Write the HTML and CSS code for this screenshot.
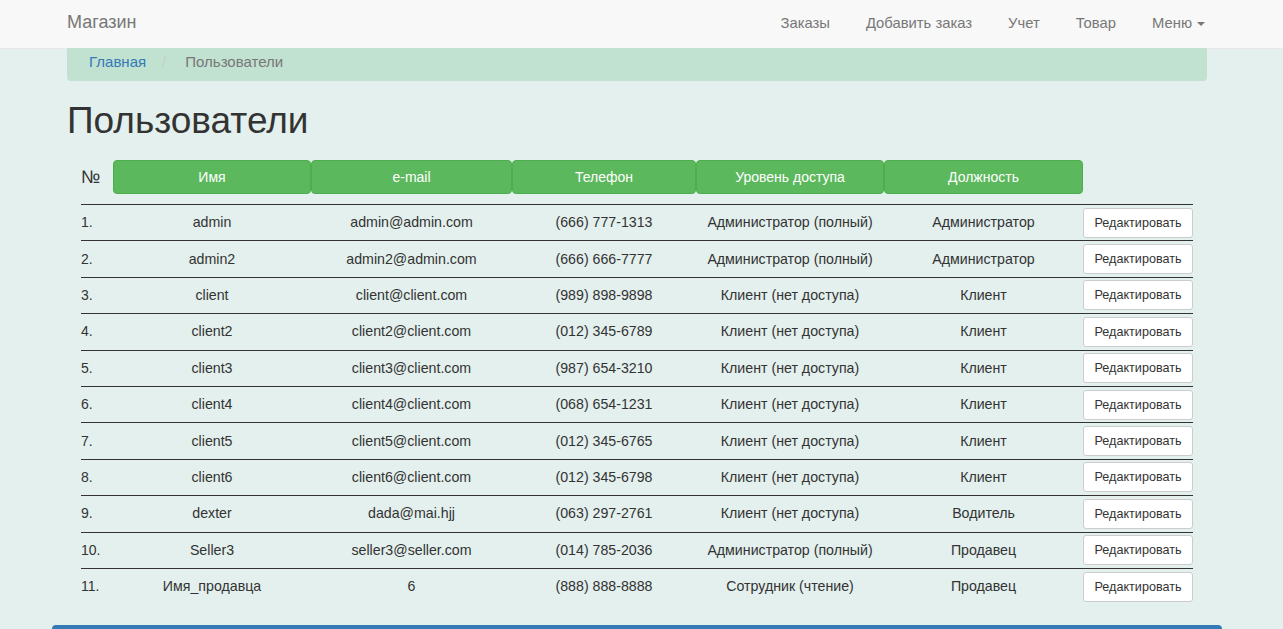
FILE: index.html
```html
<!DOCTYPE html>
<html lang="ru">
<head>
<meta charset="utf-8">
<title>Пользователи</title>
<link rel="stylesheet" href="styles.css">
</head>
<body>
<nav class="navbar">
  <div class="nav-inner">
    <a class="brand" href="#">Магазин</a>
    <ul class="nav-links">
      <li><a href="#">Заказы</a></li>
      <li><a href="#">Добавить заказ</a></li>
      <li><a href="#">Учет</a></li>
      <li><a href="#">Товар</a></li>
      <li><a href="#">Меню<span class="caret"></span></a></li>
    </ul>
  </div>
</nav>
<div class="container">
  <ol class="breadcrumb">
    <li><a href="#">Главная</a></li>
    <li class="sep">/</li>
    <li class="active">Пользователи</li>
  </ol>
  <h1 class="title">Пользователи</h1>
  <table class="users">
    <colgroup>
      <col class="c-num"><col class="c-name"><col class="c-mail"><col class="c-tel"><col class="c-lvl"><col class="c-pos"><col class="c-btn">
    </colgroup>
    <thead>
      <tr>
        <th class="num-h">№</th>
        <th><span class="hbtn">Имя</span></th>
        <th><span class="hbtn">e-mail</span></th>
        <th><span class="hbtn">Телефон</span></th>
        <th><span class="hbtn">Уровень доступа</span></th>
        <th><span class="hbtn">Должность</span></th>
        <th></th>
      </tr>
    </thead>
    <tbody>
      <tr><td class="num">1.</td><td>admin</td><td>admin@admin.com</td><td>(666) 777-1313</td><td>Администратор (полный)</td><td>Администратор</td><td><button class="ebtn">Редактировать</button></td></tr>
      <tr><td class="num">2.</td><td>admin2</td><td>admin2@admin.com</td><td>(666) 666-7777</td><td>Администратор (полный)</td><td>Администратор</td><td><button class="ebtn">Редактировать</button></td></tr>
      <tr><td class="num">3.</td><td>client</td><td>client@client.com</td><td>(989) 898-9898</td><td>Клиент (нет доступа)</td><td>Клиент</td><td><button class="ebtn">Редактировать</button></td></tr>
      <tr><td class="num">4.</td><td>client2</td><td>client2@client.com</td><td>(012) 345-6789</td><td>Клиент (нет доступа)</td><td>Клиент</td><td><button class="ebtn">Редактировать</button></td></tr>
      <tr><td class="num">5.</td><td>client3</td><td>client3@client.com</td><td>(987) 654-3210</td><td>Клиент (нет доступа)</td><td>Клиент</td><td><button class="ebtn">Редактировать</button></td></tr>
      <tr><td class="num">6.</td><td>client4</td><td>client4@client.com</td><td>(068) 654-1231</td><td>Клиент (нет доступа)</td><td>Клиент</td><td><button class="ebtn">Редактировать</button></td></tr>
      <tr><td class="num">7.</td><td>client5</td><td>client5@client.com</td><td>(012) 345-6765</td><td>Клиент (нет доступа)</td><td>Клиент</td><td><button class="ebtn">Редактировать</button></td></tr>
      <tr><td class="num">8.</td><td>client6</td><td>client6@client.com</td><td>(012) 345-6798</td><td>Клиент (нет доступа)</td><td>Клиент</td><td><button class="ebtn">Редактировать</button></td></tr>
      <tr><td class="num">9.</td><td>dexter</td><td>dada@mai.hjj</td><td>(063) 297-2761</td><td>Клиент (нет доступа)</td><td>Водитель</td><td><button class="ebtn">Редактировать</button></td></tr>
      <tr><td class="num">10.</td><td>Seller3</td><td>seller3@seller.com</td><td>(014) 785-2036</td><td>Администратор (полный)</td><td>Продавец</td><td><button class="ebtn">Редактировать</button></td></tr>
      <tr><td class="num">11.</td><td>Имя_продавца</td><td>6</td><td>(888) 888-8888</td><td>Сотрудник (чтение)</td><td>Продавец</td><td><button class="ebtn">Редактировать</button></td></tr>
    </tbody>
  </table>
</div>
<div class="footer-bar"></div>
</body>
</html>
```

FILE: styles.css
```css
* { box-sizing: border-box; }
html, body { margin: 0; padding: 0; }
body {
  background: #e3f0ed;
  font-family: "Liberation Sans", Arial, sans-serif;
  font-size: 14px;
  line-height: 20px;
  color: #333;
}
a { text-decoration: none; }

.navbar {
  height: 49px;
  background: #f8f8f8;
  border-bottom: 1px solid #e7e7e7;
}
.nav-inner {
  width: 1140px;
  margin-left: 67px;
  height: 48px;
  display: flex;
  align-items: center;
  justify-content: space-between;
}
.brand {
  font-size: 18px;
  color: #777;
  line-height: 20px;
  margin-top: -4px;
}
.nav-links {
  list-style: none;
  margin: 0;
  padding: 0;
  display: flex;
  gap: 36px;
  margin-right: 2px;
  margin-top: -3px;
}
.nav-links a {
  color: #777;
  font-size: 14.8px;
}
.caret {
  display: inline-block;
  width: 0;
  height: 0;
  margin-left: 5px;
  vertical-align: middle;
  border-top: 4px solid #777;
  border-left: 4px solid transparent;
  border-right: 4px solid transparent;
}

.container {
  width: 1140px;
  margin-left: 67px;
}
.breadcrumb {
  list-style: none;
  margin: -1px 0 0;
  padding: 4px 22px;
  height: 33px;
  background: #c1e1d1;
  border-radius: 0 0 4px 4px;
  display: flex;
  font-size: 15px;
}
.breadcrumb a { color: #337ab7; }
.breadcrumb .sep { color: #ccc; margin: 0 19px 0 16px; }
.breadcrumb .active { color: #777; }

.title {
  font-size: 37px;
  font-weight: 500;
  line-height: 40px;
  margin: 20px 0 10px;
  color: #333;
}

.users {
  margin-left: 14px;
  width: 1112px;
  table-layout: fixed;
  border-collapse: collapse;
  border-spacing: 0;
}
.c-num { width: 32px; }
.c-name { width: 198px; }
.c-mail { width: 201px; }
.c-tel { width: 184px; }
.c-lvl { width: 188px; }
.c-pos { width: 199px; }
.c-btn { width: 110px; }

.users th {
  padding: 9px 0 10px;
  font-weight: normal;
  text-align: center;
}
.users th.num-h {
  text-align: left;
  font-size: 18px;
}
.hbtn {
  display: block;
  height: 34px;
  line-height: 20px;
  padding: 6px 4px;
  background: #5cb85c;
  border: 1px solid #4cae4c;
  border-radius: 4px;
  color: #fff;
  font-size: 14px;
}
.users td {
  border-top: 1px solid #333;
  height: 36.4px;
  padding: 0 0 1px;
  text-align: center;
  vertical-align: middle;
  font-size: 14.2px;
}
.users td.num { text-align: left; font-size: 14px; }
.ebtn {
  display: block;
  width: 110px;
  height: 30px;
  margin: 1px 0 0;
  padding: 5px 4px;
  font-family: "Liberation Sans", Arial, sans-serif;
  font-size: 12.6px;
  line-height: 18px;
  color: #333;
  background: #fff;
  border: 1px solid #ccc;
  border-radius: 3px;
}

.footer-bar {
  width: 1170px;
  margin: 20px 0 0 52px;
  height: 50px;
  background: #337ab7;
  border-radius: 4px 4px 0 0;
}
```
